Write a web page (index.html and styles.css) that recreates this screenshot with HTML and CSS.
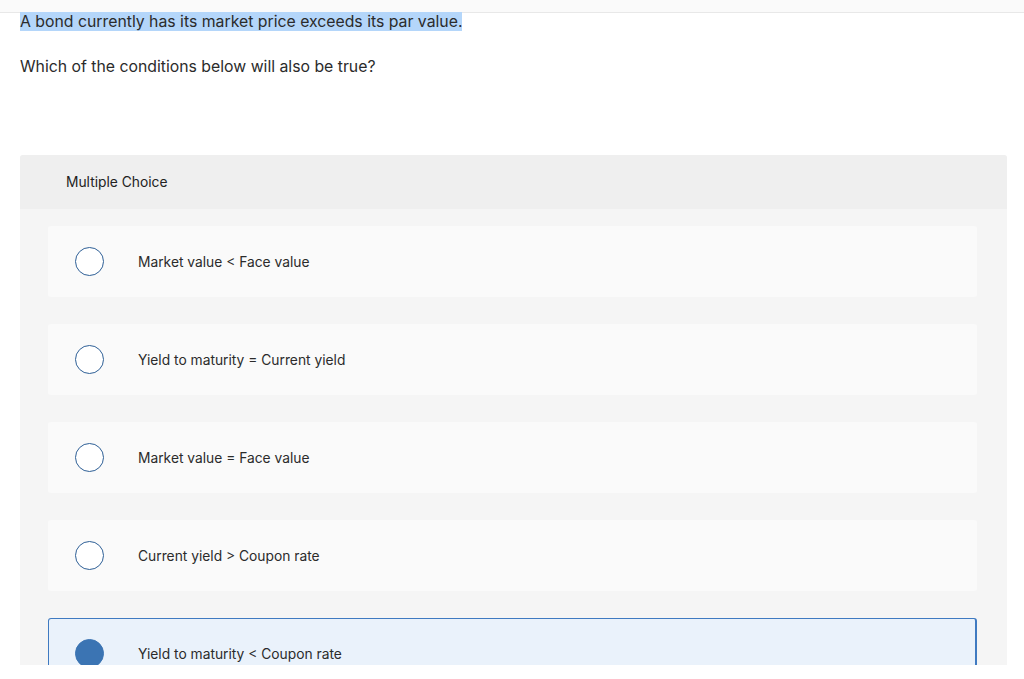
FILE: index.html
```html
<!DOCTYPE html>
<html>
<head>
<meta charset="utf-8">
<link rel="stylesheet" href="styles.css">
</head>
<body>
<div class="page">
  <div class="topbar"></div>
  <div class="content">
    <p class="prompt"><span class="hl">A bond currently has its market price exceeds its par value.</span></p>
    <p class="question">Which of the conditions below will also be true?</p>
    <div class="panel">
      <div class="panel-head">Multiple Choice</div>
      <div class="options">
        <div class="option"><span class="radio"></span><span class="label">Market value &lt; Face value</span></div>
        <div class="option"><span class="radio"></span><span class="label">Yield to maturity = Current yield</span></div>
        <div class="option"><span class="radio"></span><span class="label">Market value = Face value</span></div>
        <div class="option"><span class="radio"></span><span class="label">Current yield &gt; Coupon rate</span></div>
        <div class="option selected"><span class="radio"></span><span class="label">Yield to maturity &lt; Coupon rate</span></div>
      </div>
    </div>
  </div>
</div>
</body>
</html>
```

FILE: styles.css
```css
html, body {
  margin: 0;
  padding: 0;
  background: #ffffff;
}
.page {
  height: 665px;
  overflow: hidden;
  font-family: "Inter", "Open Sans", "Liberation Sans", sans-serif;
  color: #2b2b2b;
}
.topbar {
  height: 12px;
  background: #fafafa;
  border-bottom: 1px solid #e8e8e8;
}
.content {
  padding: 0 17px 0 20px;
}
.prompt {
  margin: 0;
  font-size: 15.8px;
  line-height: 18px;
}
.hl {
  background: #b4d6fa;
}
.question {
  margin: 27px 0 0;
  font-size: 15.8px;
  line-height: 18px;
}
.panel {
  margin-top: 79px;
  background: #f5f5f5;
  border-radius: 3px 3px 0 0;
}
.panel-head {
  background: #efefef;
  height: 54px;
  display: flex;
  align-items: center;
  padding-left: 46px;
  font-size: 13.8px;
  color: #222;
  border-radius: 3px 3px 0 0;
}
.options {
  display: flex;
  flex-direction: column;
  gap: 27px;
  padding: 17px 30px 40px 28px;
}
.option {
  height: 71px;
  background: #fafafa;
  border-radius: 3px;
  display: flex;
  align-items: center;
  box-sizing: border-box;
  border: 1px solid transparent;
}
.radio {
  width: 27px;
  height: 27px;
  border: 1.5px solid #2e5f96;
  border-radius: 50%;
  background: #fff;
  margin-left: 26px;
  flex: none;
}
.label {
  margin-left: 34px;
  font-size: 13.8px;
  color: #2b2b2b;
}
.option.selected {
  background: #eaf2fb;
  border: 1px solid #3f7ac1;
  border-right-width: 2px;
}
.option.selected .radio {
  background: #3b74b3;
  border-color: #3b74b3;
}
```
